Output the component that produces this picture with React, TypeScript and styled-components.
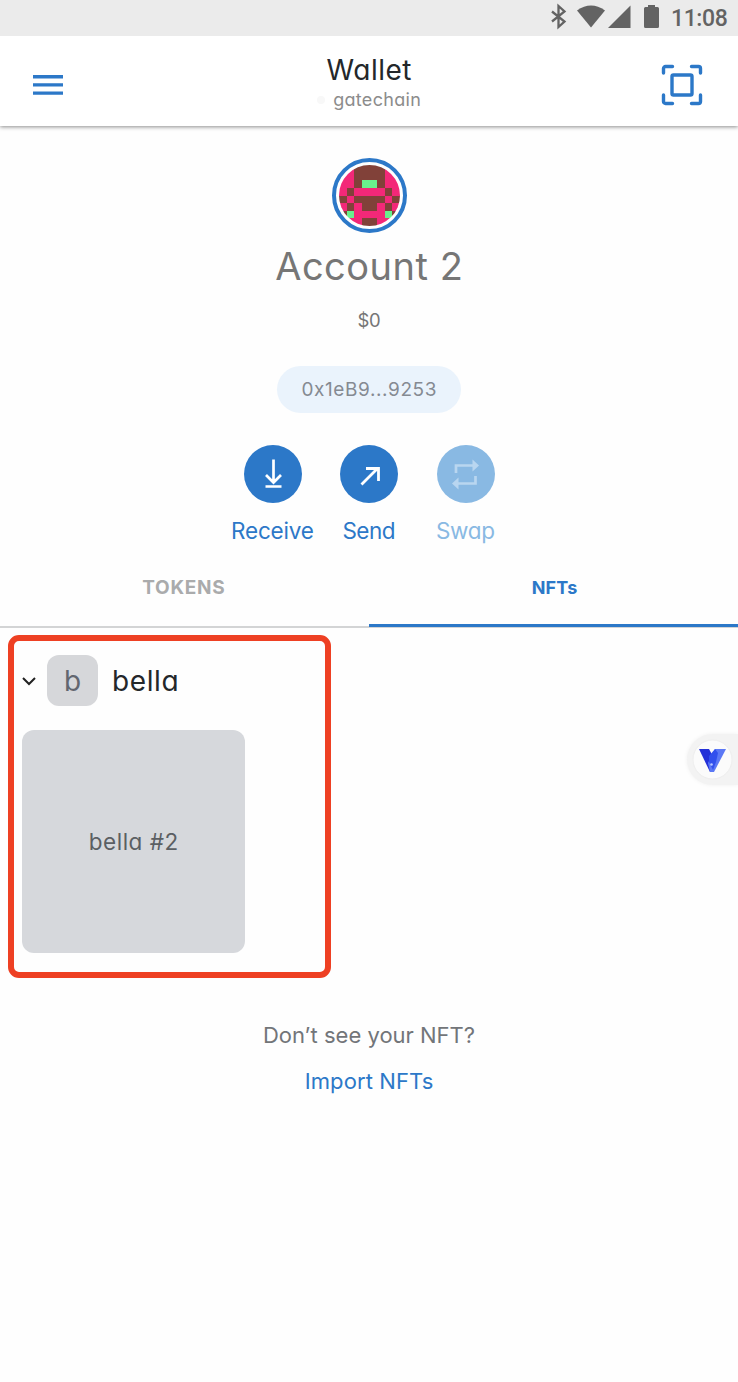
import React from "react";
import styled, { createGlobalStyle } from "styled-components";

const BLUE = "#2c78c8";
const MUTED_BLUE = "#89b9e3";

const Global = createGlobalStyle`
  * { box-sizing: border-box; }
  body {
    margin: 0;
    background: #fefefe;
    font-family: Inter, "Liberation Sans", sans-serif;
    font-feature-settings: "cv11" 1, "calt" 0;
  }
`;

const Screen = styled.main`
  display: flex;
  flex-direction: column;
  min-height: 1382px;
  position: relative;
  overflow: hidden;
`;

const Text = styled.span<{
  $size: number;
  $line: number;
  $color?: string;
  $spacing?: number;
  $weight?: number;
}>`
  display: block;
  font-size: ${(p) => p.$size}px;
  line-height: ${(p) => p.$line}px;
  color: ${(p) => p.$color ?? "#24272a"};
  letter-spacing: ${(p) => p.$spacing ?? 0}px;
  margin-right: ${(p) => -(p.$spacing ?? 0)}px;
  font-weight: ${(p) => p.$weight ?? 400};
  white-space: nowrap;
`;

const StatusBar = styled.div`
  height: 36px;
  background: #ebebeb;
  display: flex;
  align-items: center;
  justify-content: flex-end;
  padding-right: 10px;
`;

const StatusIcons = styled.svg`
  width: 116px;
  height: 36px;
  margin-right: 7px;
`;

const Clock = styled.span`
  font: 500 23px/36px Roboto, sans-serif;
  color: #636363;
  letter-spacing: -0.4px;
  width: 57px;
  padding-top: 2px;
  white-space: nowrap;
`;

const Header = styled.header`
  height: 90px;
  background: #fff;
  display: grid;
  grid-template-columns: 80px 1fr 80px;
  align-items: center;
  box-shadow: 0 1px 4px rgba(0, 0, 0, 0.45);
  clip-path: inset(0 0 -8px 0);
`;

const Titles = styled.div`
  display: flex;
  flex-direction: column;
  align-items: center;
  padding-top: 2px;
`;

const Network = styled.div`
  display: flex;
  align-items: center;
  gap: 8px;
`;

const Dot = styled.i`
  width: 8px;
  height: 8px;
  border-radius: 4px;
  background: #f8f8f8;
`;

const MenuIcon = styled.svg`
  width: 30px;
  height: 22px;
  margin: 8px 0 0 33px;
`;

const ScanIcon = styled.svg`
  width: 42px;
  height: 42px;
  margin: 8px 0 0 3px;
`;

const Account = styled.section`
  display: flex;
  flex-direction: column;
  align-items: center;
  padding-top: 32px;
`;

const Avatar = styled.div`
  width: 75px;
  height: 75px;
  border: 4px solid ${BLUE};
  border-radius: 50%;
  display: flex;
  align-items: center;
  justify-content: center;
  svg {
    display: block;
    width: 61px;
    height: 61px;
    border-radius: 50%;
  }
`;

const Name = styled.div`
  margin-top: 9px;
`;

const Balance = styled.div`
  margin-top: 18px;
`;

const Address = styled.div`
  margin-top: 34px;
  width: 184px;
  height: 47px;
  border-radius: 24px;
  background: #eaf3fc;
  display: flex;
  align-items: center;
  justify-content: center;
`;

const Actions = styled.div`
  margin-top: 32px;
  display: grid;
  grid-template-columns: repeat(3, 96.5px);
  justify-items: center;
`;

const Action = styled.div`
  display: flex;
  flex-direction: column;
  align-items: center;
`;

const Disc = styled.svg<{ $disabled?: boolean }>`
  width: 58px;
  height: 58px;
  border-radius: 50%;
  background: ${(p) => (p.$disabled ? MUTED_BLUE : BLUE)};
  margin-bottom: 13px;
`;

const Tabs = styled.nav`
  display: grid;
  grid-template-columns: 1fr 1fr;
  height: 82px;
  border-bottom: 2px solid #d3d4d5;
`;

const Tab = styled.div<{ $active?: boolean }>`
  display: flex;
  justify-content: center;
  padding: ${(p) => (p.$active ? "30px 0 0 2px" : "30px 2px 0 0")};
  height: 81px;
  border-bottom: 3px solid ${(p) => (p.$active ? BLUE : "transparent")};
`;

const Collection = styled.section`
  width: 323px;
  height: 343px;
  margin: 7px 0 0 8px;
  border: 6px solid #ee4023;
  border-radius: 11px;
  padding: 14px 8px;
`;

const CollectionHead = styled.div`
  display: flex;
  align-items: center;
  height: 51px;
`;

const Chevron = styled.svg`
  width: 14px;
  height: 10px;
  margin-right: 11px;
`;

const Badge = styled.div`
  width: 51px;
  height: 51px;
  border-radius: 12px;
  background: #d6d7da;
  display: flex;
  align-items: center;
  justify-content: center;
  margin-right: 14px;
`;

const Card = styled.div`
  width: 223px;
  height: 223px;
  margin-top: 24px;
  border-radius: 12px;
  background: #d6d8dc;
  display: flex;
  align-items: center;
  justify-content: center;
`;

const Footer = styled.footer`
  margin-top: 42px;
  display: flex;
  flex-direction: column;
  align-items: center;
  gap: 16px;
`;

const FloatingButton = styled.div`
  position: absolute;
  right: 0;
  top: 734px;
  width: 51px;
  height: 51px;
  border-radius: 26px 0 0 26px;
  background: #f3f3f3;
  box-shadow: 0 0 4px rgba(0, 0, 0, 0.06);
  svg {
    display: block;
  }
`;

const PATTERN = ["ppbb", "ppbb", "ppbg", "pbpp", "bpbb", "pbpb", "bgpp", "pppb"];
const FILL: Record<string, string> = { p: "#f32878", b: "#814139", g: "#69f08d" };

function Identicon() {
  return (
    <svg viewBox="0 0 8 8" shapeRendering="crispEdges">
      {PATTERN.map((half, y) =>
        [...half, ...[...half].reverse()].map((c, x) => (
          <rect key={`${x}-${y}`} x={x} y={y} width="1" height="1" fill={FILL[c]} />
        ))
      )}
    </svg>
  );
}

export default function App() {
  return (
    <Screen>
      <Global />
      <StatusBar>
        <StatusIcons viewBox="548 0 116 36" fill="#636363">
          <path d="M552 11.500l12.500 10-6 5.500V6l6 5.500L552 21.500" fill="none" stroke="#636363" strokeWidth="2.300" />
          <path d="M577 10.500Q591 0.500 605 10.500L591 27.500z" />
          <path d="M630.500 5.500V28H608z" />
          <path d="M648 5h7v2h2.500a1.500 1.500 0 0 1 1.500 1.500V26.500a1.500 1.500 0 0 1-1.500 1.500h-12a1.500 1.500 0 0 1-1.500-1.500V8.500a1.500 1.500 0 0 1 1.500-1.500h2.500z" />
        </StatusIcons>
        <Clock>11:08</Clock>
      </StatusBar>
      <Header>
        <MenuIcon viewBox="0 0 30 22" stroke={BLUE} strokeWidth="3.400">
          <path d="M0 2.700h30M0 10.900h30M0 19.100h30" />
        </MenuIcon>
        <Titles>
          <Text $size={28} $line={36} $spacing={0.5}>Wallet</Text>
          <Network>
            <Dot />
            <Text $size={18} $line={24} $spacing={0.3} $color="#8c8c8c">gatechain</Text>
          </Network>
        </Titles>
        <ScanIcon viewBox="0 0 42 42" fill="none" stroke={BLUE} strokeWidth="3.400" strokeLinejoin="round" strokeLinecap="round">
          <path d="M2.500 9V4.500a2 2 0 0 1 2-2H11.500M30.500 2.500h7a2 2 0 0 1 2 2V9M39.500 31v6.500a2 2 0 0 1-2 2H30.500M11.500 39.500H4.500a2 2 0 0 1-2-2V31" />
          <rect x="11" y="11" width="20" height="20" rx="1.500" />
        </ScanIcon>
      </Header>
      <Account>
        <Avatar><Identicon /></Avatar>
        <Name><Text $size={38} $line={48} $spacing={0.5} $color="#767676">Account 2</Text></Name>
        <Balance><Text $size={18.5} $line={24} $spacing={-0.3} $color="#767676">$0</Text></Balance>
        <Address><Text $size={19} $line={24} $spacing={0.6} $color="#858a92">0x1eB9...9253</Text></Address>
        <Actions>
          <Action>
            <Disc viewBox="0 0 58 58" fill="none" stroke="#fff" strokeWidth="2.700">
              <path d="M29.500 14.500V37M22 30l7.500 7.500L37 30M21.500 41.500h16" />
            </Disc>
            <Text $size={22.5} $line={30} $spacing={-0.2} $color={BLUE}>Receive</Text>
          </Action>
          <Action>
            <Disc viewBox="0 0 58 58" fill="none" stroke="#fff" strokeWidth="2.800">
              <path d="M21.500 39.500L38 23M26 23.500h12.500V36" />
            </Disc>
            <Text $size={22.5} $line={30} $spacing={-0.5} $color={BLUE}>Send</Text>
          </Action>
          <Action>
            <Disc $disabled viewBox="0 0 58 58" fill="none" stroke="#b9d6f0" strokeWidth="2.700">
              <path d="M19 28v-7.500h17M38.500 31v7.500H21" />
              <path d="M35.500 14.500l6.500 6-6.500 6zM21.500 32.500l-6.500 6 6.500 6z" fill="#b9d6f0" stroke="none" />
            </Disc>
            <Text $size={22.5} $line={30} $spacing={-0.3} $color={MUTED_BLUE}>Swap</Text>
          </Action>
        </Actions>
      </Account>
      <Tabs>
        <Tab><Text $size={19} $line={24} $weight={700} $spacing={0.7} $color="#aaabac">TOKENS</Text></Tab>
        <Tab $active><Text $size={18} $line={24} $weight={700} $spacing={0.2} $color={BLUE}>NFTs</Text></Tab>
      </Tabs>
      <Collection>
        <CollectionHead>
          <Chevron viewBox="0 0 14 10" fill="none" stroke="#222" strokeWidth="2">
            <path d="M1 2l6 6 6-6" />
          </Chevron>
          <Badge><Text $size={28} $line={36} $color="#62666f">b</Text></Badge>
          <Text $size={28} $line={36} $spacing={0.6}>bella</Text>
        </CollectionHead>
        <Card><Text $size={22.5} $line={30} $spacing={0.5} $color="#5b5f63">bella #2</Text></Card>
      </Collection>
      <Footer>
        <Text $size={22} $line={30} $color="#727579">Don’t see your NFT?</Text>
        <Text $size={22} $line={30} $spacing={0.1} $color={BLUE}>Import NFTs</Text>
      </Footer>
      <FloatingButton>
        <svg width="51" height="51" viewBox="0 0 51 51">
          <circle cx="25.500" cy="25.500" r="19.500" fill="#fbfbfb" stroke="#eeeeee" />
          <path d="M12 15h10l7 13-4.500 10h-1.500z" fill="#2431d8" />
          <path d="M28 15h11L27 38h-4l-2-9z" fill="#5b78f5" />
          <path d="M22 22l6-7 3 4-2 9-3 8-4-8z" fill="#3150ed" />
          <circle cx="24.500" cy="30.500" r="1.300" fill="#b9c9ff" />
        </svg>
      </FloatingButton>
    </Screen>
  );
}
